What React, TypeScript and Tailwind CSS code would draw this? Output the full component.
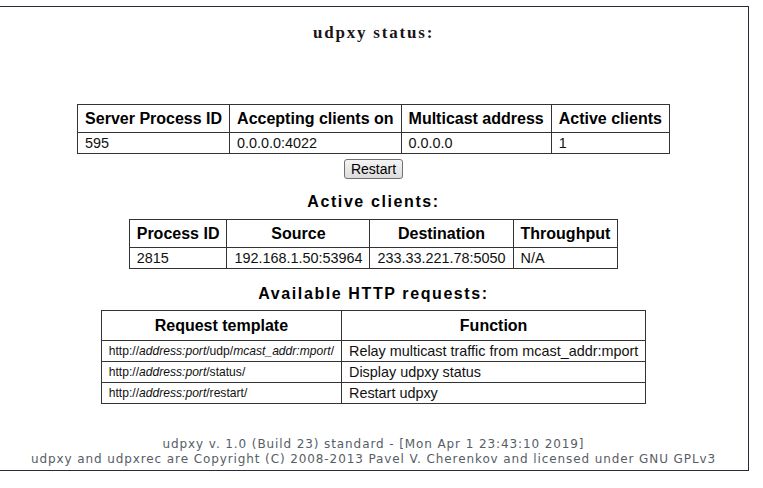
import React from 'react';

const th = 'border border-[#333] px-[7px] pt-[4px] pb-[4px] text-[16px] leading-[19px] font-bold text-center text-black';
const td = 'border border-[#333] px-[7px] py-[2px] text-[14.4px] leading-[16px] text-left text-[#111]';
const tdUrl = 'border border-[#333] px-[7px] py-[2px] text-[12.1px] leading-[16px] text-left text-[#111]';
const thWide = 'border border-[#333] px-[7px] pt-[5px] pb-[5px] text-[16px] leading-[19px] font-bold text-center text-black';

const Heading: React.FC<{ children: React.ReactNode; className?: string }> = ({ children, className }) => (
    <div className={`text-[16px] leading-[20px] font-bold tracking-[0.1em] text-black ${className ?? ''}`}>{children}</div>
);

export default function App() {
    return (
        <div className="bg-white w-[763px] h-[488px] overflow-hidden pt-[6px]" style={{ fontFamily: '"Liberation Sans", Arial, sans-serif' }}>
            <div className="-ml-[2px] w-[751px] h-[465px] border border-[#2b2838] flex flex-col items-center">
                <div className="mt-[16px] text-[17px] leading-[20px] font-bold tracking-[1.8px] text-[#1a1418] font-['Liberation_Serif',serif]">
                    udpxy status:
                </div>

                <table className="mt-[61px] border-collapse">
                    <thead>
                        <tr>
                            <th className={th}>Server Process ID</th>
                            <th className={th}>Accepting clients on</th>
                            <th className={th}>Multicast address</th>
                            <th className={th}>Active clients</th>
                        </tr>
                    </thead>
                    <tbody>
                        <tr>
                            <td className={td}>595</td>
                            <td className={td}>0.0.0.0:4022</td>
                            <td className={td}>0.0.0.0</td>
                            <td className={td}>1</td>
                        </tr>
                    </tbody>
                </table>

                <button className="mt-[5px] h-[20px] px-[6px] rounded-[3px] border border-[#707070] bg-gradient-to-b from-[#f4f4f4] to-[#dcdcdc] text-[14px] leading-[16px] text-black">
                    Restart
                </button>

                <Heading className="mt-[13px]">Active clients:</Heading>

                <table className="mt-[7px] border-collapse">
                    <thead>
                        <tr>
                            <th className={th}>Process ID</th>
                            <th className={th}>Source</th>
                            <th className={th}>Destination</th>
                            <th className={th}>Throughput</th>
                        </tr>
                    </thead>
                    <tbody>
                        <tr>
                            <td className={td}>2815</td>
                            <td className={td}>192.168.1.50:53964</td>
                            <td className={td}>233.33.221.78:5050</td>
                            <td className={td}>N/A</td>
                        </tr>
                    </tbody>
                </table>

                <Heading className="mt-[15px]">Available HTTP requests:</Heading>

                <table className="mt-[6px] border-collapse">
                    <thead>
                        <tr>
                            <th className={thWide}>Request template</th>
                            <th className={thWide}>Function</th>
                        </tr>
                    </thead>
                    <tbody>
                        <tr>
                            <td className={tdUrl}>http://<i>address:port</i>/udp/<i>mcast_addr:mport</i>/</td>
                            <td className={td}>Relay multicast traffic from mcast_addr:mport</td>
                        </tr>
                        <tr>
                            <td className={tdUrl}>http://<i>address:port</i>/status/</td>
                            <td className={td}>Display udpxy status</td>
                        </tr>
                        <tr>
                            <td className={tdUrl}>http://<i>address:port</i>/restart/</td>
                            <td className={td}>Restart udpxy</td>
                        </tr>
                    </tbody>
                </table>

                <div className="mt-[33px] text-center text-[12px] leading-[15px] tracking-[0.9px] text-[#575d66] font-['DejaVu_Sans',sans-serif]">
                    <div>udpxy v. 1.0 (Build 23) standard - [Mon Apr 1 23:43:10 2019]</div>
                    <div>udpxy and udpxrec are Copyright (C) 2008-2013 Pavel V. Cherenkov and licensed under GNU GPLv3</div>
                </div>
            </div>
        </div>
    );
}
